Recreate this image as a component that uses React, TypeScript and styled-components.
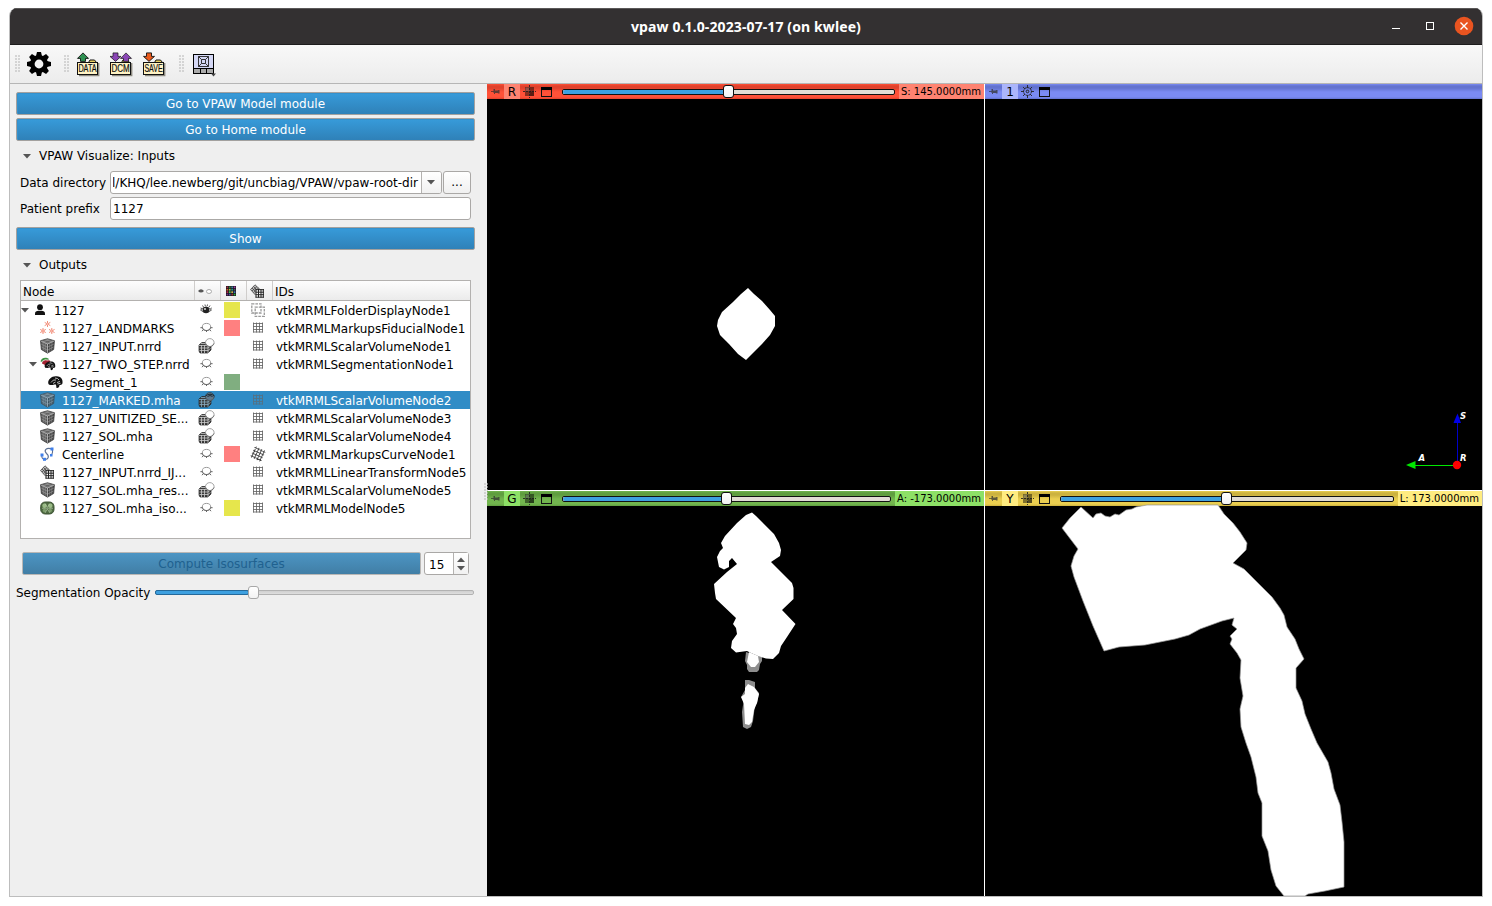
import React from 'react';
import styled, { createGlobalStyle, css } from 'styled-components';

const Global = createGlobalStyle`
  * { box-sizing: border-box; }
  body { margin: 0; background: #fff; font-family: "DejaVu Sans", sans-serif; font-size: 12px; color: #000; }
  svg { display: block; flex: none; overflow: visible; }
`;

const Screen = styled.div`
  width: 1492px;
  height: 906px;
  padding: 8px 9px 9px 9px;
  overflow: hidden;
`;
const Window = styled.div`
  width: 1474px;
  height: 889px;
  border: 1px solid #bdbdbd;
  border-top: 0;
  border-radius: 8px 8px 0 0;
  overflow: hidden;
  display: flex;
  flex-direction: column;
  background: #efefef;
`;
const TitleBar = styled.header`
  height: 37px;
  flex: none;
  background: #333031;
  border-top: 1px solid #5a5858;
  border-bottom: 1px solid #1d1c1c;
  display: grid;
  grid-template-columns: 1fr auto 1fr;
  align-items: center;
`;
const Title = styled.h1`
  grid-column: 2;
  margin: 0;
  color: #fff;
  font: bold 14px/20px "Noto Sans", sans-serif;
  letter-spacing: 0.11px;
  white-space: nowrap;
`;
const WindowControls = styled.div`
  display: flex;
  justify-content: flex-end;
  padding-right: 8px;
`;
const Toolbar = styled.div`
  height: 39px;
  flex: none;
  border-bottom: 1px solid #b6b6b6;
  background: linear-gradient(#f8f8f8, #ececec);
  display: flex;
  align-items: center;
  padding-left: 5px;
`;
const Grip = styled.i<{ $ml?: number }>`
  width: 5px;
  height: 18px;
  margin-left: ${p => p.$ml ?? 0}px;
  background: radial-gradient(circle at 1px 1px, #bdbdbd 0.6px, transparent 0.85px) 0 0 / 3px 3px;
`;
const ToolIcon = styled.span<{ $ml: number }>`
  margin-left: ${p => p.$ml}px;
`;
const Body = styled.main`
  flex: 1;
  display: flex;
  min-height: 0;
`;
const Side = styled.aside`
  width: 477px;
  flex: none;
  padding: 8px 12px 0 6px;
  position: relative;
`;
const Splitter = styled(Grip)`
  position: absolute;
  right: -1px;
  top: 399px;
  width: 4px;
`;
const BlueButton = styled.button<{ $gap?: number }>`
  display: block;
  width: 100%;
  height: 23px;
  margin: 0 0 ${p => p.$gap ?? 3}px;
  padding: 1px 0 0;
  border: 1px solid #a3a19f;
  border-radius: 2px;
  background: linear-gradient(#379bda, #2f81b8);
  box-shadow: inset 1px 1px 0 #3491cd;
  color: #fff;
  font: 12px "DejaVu Sans", sans-serif;
  &:disabled {
    flex: 1;
    width: auto;
    margin: 0;
    border-color: #b9b7b5;
    background: linear-gradient(#4c95c4, #417ea5);
    box-shadow: none;
    color: #20618f;
  }
`;
const SectionTitle = styled.h2<{ $h: number }>`
  margin: 0;
  height: ${p => p.$h}px;
  display: flex;
  align-items: center;
  gap: 8px;
  padding-left: 7px;
  font-size: 12px;
  font-weight: normal;
`;
const FormRow = styled.label<{ $gap: number }>`
  display: grid;
  grid-template-columns: 90px 1fr;
  align-items: center;
  height: 23px;
  margin: 0 4px ${p => p.$gap}px 4px;
`;
const frame = css`
  height: 23px;
  border: 1px solid #aaa8a6;
  border-radius: 3px;
  background: #fff;
`;
const Field = styled.div`
  ${frame}
  padding-left: 2px;
  line-height: 22px;
`;
const PathGroup = styled.div`
  display: flex;
  gap: 1px;
`;
const Combo = styled.div`
  ${frame}
  width: 332px;
  display: flex;
  overflow: hidden;
`;
const ComboText = styled.div`
  flex: 1;
  margin-left: 2px;
  padding-right: 3px;
  display: flex;
  justify-content: flex-end;
  overflow: hidden;
  white-space: nowrap;
  line-height: 22px;
`;
const ComboArrow = styled.div`
  width: 20px;
  border-left: 1px solid #b4b2b0;
  background: linear-gradient(#fff, #f1f1f1);
  display: grid;
  place-items: center;
  padding-right: 1px;
`;
const Browse = styled.button`
  ${frame}
  flex: 1;
  padding: 0 0 1px;
  background: linear-gradient(#fff, #f0f0f0);
  font: 12px "DejaVu Sans", sans-serif;
`;
const Tree = styled.div`
  margin: 0 4px 13px;
  height: 259px;
  border: 1px solid #b3b1af;
  background: #fff;
`;
const columns = css`
  display: grid;
  grid-template-columns: 174px 26px 26px 26px 1fr;
`;
const TreeHead = styled.div`
  ${columns}
  height: 20px;
  border-bottom: 1px solid #b3b1af;
  background: linear-gradient(#fdfdfd, #ebebeb);
`;
const HeadCell = styled.div<{ $center?: boolean }>`
  display: flex;
  align-items: center;
  justify-content: ${p => (p.$center ? 'center' : 'flex-start')};
  padding: ${p => (p.$center ? '0 5px 0 0' : '2px 0 0 2px')};
  border-right: 1px solid #cfcdcb;
  &:last-child { border-right: 0; }
`;
const TreeRow = styled.div<{ $selected?: boolean }>`
  ${columns}
  height: 18px;
  align-items: center;
  line-height: 18px;
  white-space: nowrap;
  ${p => p.$selected && css`background: #308cc6; color: #fff;`}
`;
const NodeCell = styled.div<{ $depth: number }>`
  display: flex;
  align-items: center;
  height: 18px;
  padding-left: ${p => p.$depth * 8}px;
`;
const RowText = styled.span`
  padding-top: 2px;
`;
const Expander = styled.span`
  width: 12px;
  display: flex;
`;
const NodeIcon = styled.span<{ $dim?: boolean }>`
  width: 15px;
  margin: 0 7px 1px -1px;
  opacity: ${p => (p.$dim ? 0.75 : 1)};
`;
const IconCell = styled.div<{ $dim?: boolean }>`
  display: flex;
  justify-content: center;
  padding: 0 4px 1px 0;
  opacity: ${p => (p.$dim ? 0.7 : 1)};
`;
const GridCell = styled(IconCell)`
  padding: 0 4px 1px 0;
`;
const Swatch = styled.div<{ $color?: string }>`
  width: 16px;
  height: 16px;
  margin-left: 3px;
  background: ${p => p.$color ?? 'transparent'};
`;
const IdCell = styled.div`
  padding: 2px 0 0 3px;
  height: 18px;
  line-height: 17px;
`;
const ActionRow = styled.div`
  display: flex;
  align-items: center;
  gap: 3px;
  margin: 0 6px 7px 6px;
`;
const Spin = styled.div`
  ${frame}
  width: 45px;
  display: flex;
  line-height: 24px;
  padding-left: 4px;
`;
const SpinArrows = styled.div`
  width: 15px;
  margin-left: auto;
  border-left: 1px solid #b4b2b0;
  background: linear-gradient(#fff, #f1f1f1);
  display: flex;
  flex-direction: column;
  align-items: center;
  justify-content: center;
  gap: 4px;
`;
const SliderRow = styled.div`
  display: flex;
  align-items: center;
  height: 21px;
  gap: 5px;
  padding-right: 1px;
`;
const Track = styled.div<{ $dark?: boolean }>`
  flex: 1;
  height: ${p => (p.$dark ? 6 : 5)}px;
  display: flex;
  align-items: center;
  border: 1px solid ${p => (p.$dark ? '#111' : '#b2b2b2')};
  border-radius: 2px;
  background: ${p => (p.$dark ? '#e2ddd5' : 'linear-gradient(#cfcfcf, #dedede)')};
`;
const Fill = styled.div<{ $w: number; $dark?: boolean }>`
  width: ${p => p.$w}px;
  height: ${p => (p.$dark ? 4 : 5)}px;
  flex: none;
  margin-left: ${p => (p.$dark ? 0 : -1)}px;
  background: #3da0e0;
  border: ${p => (p.$dark ? '0' : '1px solid #24699a')};
  border-radius: 2px;
`;
const Handle = styled.div<{ $dark?: boolean }>`
  width: 11px;
  height: 13px;
  flex: none;
  margin-left: -1px;
  border: 1px solid ${p => (p.$dark ? '#111' : '#a8a8a8')};
  border-radius: 3px;
  background: linear-gradient(#fff, #f3f3f3);
`;
const Views = styled.section`
  flex: 1;
  display: grid;
  grid-template-columns: 497px 497px;
  grid-template-rows: 406px 405px;
  gap: 1px;
  background: #fff;
`;
const View = styled.div`
  background: #000;
  display: flex;
  flex-direction: column;
  overflow: hidden;
`;
const ViewBar = styled.div<{ $a: string; $b: string }>`
  height: 15px;
  flex: none;
  display: flex;
  align-items: center;
  padding-left: 5px;
  background: linear-gradient(${p => p.$b} 0, ${p => p.$a} 2px, ${p => p.$a} 4px, ${p => p.$b} 8px, ${p => p.$b} 13px, ${p => p.$a} 15px);
`;
const ViewName = styled.div<{ $bg: string }>`
  width: 16px;
  height: 15px;
  margin: 0 3px;
  background: ${p => p.$bg};
  text-align: center;
  line-height: 16px;
`;
const BarIcons = styled.div`
  display: flex;
  align-items: center;
  gap: 5px;
  margin-right: 9px;
`;
const Offset = styled.div<{ $bg: string; $w: number }>`
  width: ${p => p.$w}px;
  height: 15px;
  margin-left: 4px;
  padding-right: 3px;
  background: ${p => p.$bg};
  text-align: right;
  font-size: 10px;
  line-height: 15px;
  white-space: nowrap;
`;

const Down = () => <svg width="8" height="5" viewBox="0 0 8 5"><path d="M0 0h8L4 4.600z" fill="#555" /></svg>;
const Up = () => <svg width="8" height="5" viewBox="0 0 8 5"><path d="M0 5h8L4 .4z" fill="#555" /></svg>;

const Gear = () => (
  <svg width="24" height="24" viewBox="-12 -12 24 24">
    {[0, 45, 90, 135].map(a => <path key={a} d="M-2 -12H2L3.200 -7V7L2 12H-2L-3.200 7V-7Z" transform={`rotate(${a})`} />)}
    <circle r="9" /><circle r="4.400" fill="#f3f3f3" />
  </svg>
);

const arrowUp = 'M5.5 0L11 5.5H8V8.5H3V5.5H0Z';
const arrowDown = 'M5.5 8.5L11 3.5H8V0H3V3.5H0Z';
const Folder = ({ label, children }: { label: string; children: React.ReactNode }) => (
  <svg width="24" height="24" viewBox="0 0 24 24">
    <path d="M3 23.500H22.700V11" fill="none" stroke="#8d8a80" strokeWidth="1.400" />
    <path d="M12.500 10.500L14 8H18.500L20.500 10.500" fill="#e9cf60" stroke="#111" />
    <rect x="1.500" y="10.500" width="20" height="12" fill="#fff3c4" stroke="#111" />
    {children}
    <text x="2.400" y="20.200" fontFamily="Liberation Sans" fontSize="10" fill="#111" stroke="#111" strokeWidth=".2" textLength="18.200" lengthAdjust="spacingAndGlyphs">{label}</text>
  </svg>
);
const Layout = () => (
  <svg width="24" height="24" viewBox="0 0 24 24">
    <rect x="1.500" y="2.500" width="20" height="19" fill="#d5d8f5" stroke="#000" />
    <rect x="2" y="17" width="19" height="4" fill="#aaa" />
    <path d="M1 16.500H22M8.500 16.500V21M14.500 16.500V21" stroke="#000" />
    <path d="M6.500 4.500H16.500V14.500H6.500ZM9.500 7.500H13.500V11.500H9.500ZM6.500 4.500L9.500 7.500M16.500 4.500L13.500 7.500M6.500 14.500L9.500 11.500M16.500 14.500L13.500 11.500" fill="none" stroke="#222" strokeWidth=".9" />
    <path d="M19 21.500H24L21.500 24.500Z" fill="#444" />
  </svg>
);

const Eye = () => (
  <svg width="12" height="11" viewBox="0 0 12 11">
    <path d="M.5 6Q6 0 11.500 6Q6 11 .5 6Z" fill="#bbb" stroke="#666" />
    <circle cx="6" cy="6" r="3.200" fill="#222" /><circle cx="5" cy="5" r=".9" fill="#eee" />
    <path d="M.5 4L2 4.500M2.500 1.500L3.500 3M5 .5L5.300 2M7.500 .5L7.200 2M10 1.500L9 3M11.800 4L10.500 4.500" stroke="#444" strokeWidth=".9" />
  </svg>
);
const Closed = () => (
  <svg width="13" height="11" viewBox="0 0 13 11">
    <ellipse cx="6.500" cy="5" rx="4.200" ry="3.600" fill="#fff" stroke="#999" strokeWidth="1" />
    <path d="M2.300 5.500C3.500 9.500 9.500 9.500 10.700 5.500M.4 5.700H2.300M10.700 5.700H12.600M3.300 7.600L2 9.200M6.500 8.300V10M9.700 7.600L11 9.200" fill="none" stroke="#666" strokeWidth="1" />
  </svg>
);
const Cube = () => (
  <svg width="15" height="16" viewBox="0 0 15 16">
    <path d="M7.500 .7L14.500 2.700L13.700 11.500L7.500 15.200L1.300 11.500L.5 2.700Z" fill="#3f3f3f" />
    <path d="M7.500 .7L14.300 2.700L7.500 5.800L.7 2.700Z" fill="#8c8c8c" />
    <path d="M.7 3L7.500 6V15.200L1.500 11.500Z" fill="#565656" />
    <path d="M3 4L3.300 12.500M5.200 5V13.700M9.800 5V13.700M12 4L11.700 12.500M1 6L7.500 9.200L14 6M1.200 8.800L7.500 12.200L13.800 8.800" fill="none" stroke="#a9a9a9" strokeWidth=".5" />
    <path d="M3 2.200L9.800 4.700M12 2.200L5.200 4.700" stroke="#444" strokeWidth=".5" />
    <path d="M.8 3L7.500 6L14.200 3M7.500 6V15" fill="none" stroke="#d0d0d0" strokeWidth=".7" />
    <path d="M7.500 .7L14.500 2.700L13.700 11.500L7.500 15.200L1.300 11.500L.5 2.700Z" fill="none" stroke="#444" strokeWidth=".7" />
  </svg>
);
const CubeEye = ({ open }: { open?: boolean }) => (
  <svg width="17" height="16" viewBox="0 0 17 16">
    <path d="M1 7L4 4.500H11L13 7V12L10 15H2L1 13Z" fill="#3c3c3c" stroke="#222" strokeWidth=".7" />
    <path d="M1 7.500H10L12.500 5.500M1.500 10H10L12.500 8M1.500 12.500H10L12.500 10.500M3.500 7V15M6.500 7V15M10 7.500V15M3 5.500H10" fill="none" stroke={open ? '#86a9bf' : '#ccc'} strokeWidth=".8" />
    <ellipse cx="11.800" cy="4.600" rx="4.300" ry="4" fill={open ? '#60788a' : '#fff'} stroke={open ? '#2b4658' : '#999'} strokeWidth=".9" />
    <path d="M7.600 5.500Q9 8.700 11.800 8.700Q14.600 8.700 16 5.500" fill="none" stroke="#666" strokeWidth=".8" />
    {open && <path d="M7.500 4Q12 .5 16.500 4M9.500 4.500Q12 2.500 14.500 4.500" stroke="#1c2b35" fill="none" />}
  </svg>
);
const GridIcon = () => (
  <svg width="10" height="11" viewBox="0 0 10 11"><path d="M.5 .5V10.500M3.500 .5V10.500M6.500 .5V10.500M9.500 .5V10.500M0 1.500H10M0 4.500H10M0 7.500H10M0 10H10" stroke="#666" strokeWidth=".85" /></svg>
);
const TiltGrid = () => (
  <svg width="14" height="14" viewBox="-7 -7 14 14"><path transform="rotate(25)" d="M-4.500 -6V6M-1.500 -6V6M1.500 -6V6M4.500 -6V6M-6 -4.500H6M-6 -1.500H6M-6 1.500H6M-6 4.500H6" stroke="#444" strokeWidth=".9" /></svg>
);
const Transform = () => (
  <svg width="14" height="14" viewBox="0 0 14 14">
    <path d="M5 .8L10 5.500L5 10.500L.5 5.500Z" fill="#bbb" stroke="#555" strokeWidth=".9" />
    <path d="M3.500 2.500L8 7M2 4L6.500 8.500M7 2.500L2 7M8.500 4L3.500 8.500" stroke="#444" strokeWidth=".8" />
    <path d="M5.500 5.500H13.500V13.500H5.500Z" fill="#fff" />
    <path d="M6 5V13.500M8.500 5V13.500M11 5V13.500M13.300 5V13.500M5.500 5.700H14M5.500 8.200H14M5.500 10.700H14M5.500 13.200H14" stroke="#222" strokeWidth="1" />
  </svg>
);
const FolderTransform = () => (
  <svg width="14" height="14" viewBox="0 0 14 14"><path d="M.8 .8H10V10H.8ZM4.200 4.200H13.300V13.300H4.200Z" fill="none" stroke="#999" strokeWidth="1.300" strokeDasharray="2.600 1" /></svg>
);
const Palette = () => {
  const cs = ['#a12f3a', '#2f8a3a', '#3c7f9b', '#a73ca8', '#d05a2b', '#9bd03a', '#24968e', '#456', '#b3294a', '#3fc456', '#c3b04a', '#3c74b4', '#733086', '#4657a7', '#953333', '#2cac3c'];
  return <svg width="10" height="10" viewBox="0 0 10 10"><rect width="10" height="10" fill="#17131c" />{cs.map((c, i) => <rect key={i} x={.5 + (i % 4) * 2.4} y={.5 + Math.floor(i / 4) * 2.4} width="1.700" height="1.700" fill={c} />)}</svg>;
};
const Brain = ({ small }: { small?: boolean }) => (
  <g transform={small ? 'translate(4.500 3.500) scale(.74)' : undefined}>
    <path d="M.3 8.500C-.5 4.500 4 1 8 1.300C12 .8 15 4 14.500 7C15 9 13 10.500 11.500 10C11.500 12 10 13.500 8.500 13L8 9.500C6 9 5 10.500 3 10C2 10 .5 9.700 .3 8.500Z" fill="#111" />
    <path d="M3 7.500Q5 4 8 5M7 3Q10 3 11 5M9 7.500L12 6.500M9.500 9L12.500 8.300M5 8.500L7.500 7" fill="none" stroke="#ccc" strokeWidth=".9" />
  </g>
);
const Segment = () => <svg width="15" height="14" viewBox="0 0 15 14"><Brain /></svg>;
const Segmentation = () => (
  <svg width="15" height="14" viewBox="0 0 15 14">
    <path d="M.5 4.500C1 .5 6 -.5 9 2L6 5.500Z" fill="#3c9141" /><path d="M2 6.500C2 2.500 7 1.500 10.500 4L7 9Z" fill="#a52231" /><path d="M2 4.500Q5 1.700 8.500 3.200" stroke="#fff" fill="none" strokeWidth=".8" />
    <Brain small />
  </svg>
);
const Person = () => <svg width="13" height="13" viewBox="0 0 13 13"><circle cx="8" cy="4.200" r="2.900" fill="#111" /><path d="M3 12V10.500C3 8.500 4.500 8 6.500 7.800H9.500C11.500 8 13 8.500 13 10.500V12Z" fill="#111" /></svg>;
const Landmarks = () => (
  <svg width="15" height="14" viewBox="0 0 15 14">
    {[[7.5, 3], [3, 10], [11.8, 10]].map(([x, y]) => <g key={x} transform={`translate(${x} ${y})`} stroke="#f0826c" strokeWidth=".9" fill="none"><path d="M0 -3V-1M0 3V1M-2.800 -1.600L-1 -.6M2.800 -1.600L1 -.6M-2.800 1.600L-1 .6M2.800 1.600L1 .6" /><circle r="1" /></g>)}
  </svg>
);
const Curve = () => (
  <svg width="14" height="14" viewBox="0 0 14 14">
    <path d="M12 2C6 0 3.500 3.500 6.500 6.500C10 9.500 8 13 4.500 12.500C2 12 1.500 10 2 8M12 2C13 4 12.500 6.500 11 8.500" fill="none" stroke="#5b6f92" strokeWidth="1.100" />
    <g fill="#3f7fea"><rect x="10.500" y=".5" width="3" height="3" /><rect x=".5" y="6.500" width="3" height="3" /><rect x="3" y="10.800" width="3" height="3" /><rect x="10" y="7" width="2.500" height="2.500" /></g>
  </svg>
);
const Model = () => (
  <svg width="15" height="14" viewBox="0 0 15 14">
    <rect x=".7" y="1" width="13.300" height="12" rx="4.500" fill="#4f6b42" stroke="#3c5233" />
    <circle cx="4.500" cy="4.700" r="2.200" fill="#9abb86" /><circle cx="10.300" cy="4.700" r="2.200" fill="#9abb86" /><circle cx="4.500" cy="9.500" r="1.700" fill="#7d9c6b" /><circle cx="10.300" cy="9.500" r="1.700" fill="#7d9c6b" />
    <path d="M5 2.500L7.300 6.500L10 2.500M2 7.300H13M5 12L7.300 8L10 12" fill="none" stroke="#bcd0ae" strokeWidth=".6" />
  </svg>
);

const Pin = () => <svg width="9" height="7" viewBox="0 0 9 7" opacity=".75"><path d="M-1 3.500H2" stroke="#222" strokeWidth=".8" /><path d="M1.500 1H3V2.500H5.500L6.500 2H7.500V5.500H6.500L5.500 5H3V6H2V4.500H1V3H1.500Z" fill="#333" /></svg>;
const Fit = () => (
  <svg width="13" height="13" viewBox="0 0 13 13"><rect x="2" y="2" width="9" height="9" fill="#000" opacity=".45" /><rect x="2.500" y="2.500" width="4" height="3.500" fill="#fff" opacity=".2" /><path d="M6.500 0V13M0 6.500H13" stroke="#222" strokeDasharray="2 1" strokeWidth=".9" /><rect x="7" y="6.500" width="4" height="4.500" opacity=".35" /></svg>
);
const Center3D = () => (
  <svg width="13" height="13" viewBox="0 0 13 13" fill="none" stroke="#222"><circle cx="6.500" cy="6.500" r="3.900" strokeDasharray="2 1" /><circle cx="6.500" cy="6.500" r="1.300" /><path d="M6.500 0V3M6.500 10V13M0 6.500H3M10 6.500H13M2 2L4 4M11 2L9 4M2 11L4 9M11 11L9 9" strokeWidth=".9" /></svg>
);
const Maximize = () => <svg width="12" height="12" viewBox="0 0 12 12"><rect x=".5" y="1.500" width="10" height="9" fill="none" stroke="#111" /><rect x="0" y="1" width="11" height="3" fill="#000" /></svg>;

type NodeRow = { name: string; depth: number; open?: boolean; icon: React.ReactNode; vis: React.ReactNode; color?: string; grid?: React.ReactNode; id?: string; selected?: boolean };
const g = <GridIcon />;
const rows: NodeRow[] = [
  { name: '1127', depth: 0, open: true, icon: <Person />, vis: <Eye />, color: '#e6e64c', grid: <FolderTransform />, id: 'vtkMRMLFolderDisplayNode1' },
  { name: '1127_LANDMARKS', depth: 1, icon: <Landmarks />, vis: <Closed />, color: '#ff8080', grid: g, id: 'vtkMRMLMarkupsFiducialNode1' },
  { name: '1127_INPUT.nrrd', depth: 1, icon: <Cube />, vis: <CubeEye />, grid: g, id: 'vtkMRMLScalarVolumeNode1' },
  { name: '1127_TWO_STEP.nrrd', depth: 1, open: true, icon: <Segmentation />, vis: <Closed />, grid: g, id: 'vtkMRMLSegmentationNode1' },
  { name: 'Segment_1', depth: 2, icon: <Segment />, vis: <Closed />, color: '#80ae80' },
  { name: '1127_MARKED.mha', depth: 1, icon: <Cube />, vis: <CubeEye open />, grid: g, id: 'vtkMRMLScalarVolumeNode2', selected: true },
  { name: '1127_UNITIZED_SE...', depth: 1, icon: <Cube />, vis: <CubeEye />, grid: g, id: 'vtkMRMLScalarVolumeNode3' },
  { name: '1127_SOL.mha', depth: 1, icon: <Cube />, vis: <CubeEye />, grid: g, id: 'vtkMRMLScalarVolumeNode4' },
  { name: 'Centerline', depth: 1, icon: <Curve />, vis: <Closed />, color: '#ff8080', grid: <TiltGrid />, id: 'vtkMRMLMarkupsCurveNode1' },
  { name: '1127_INPUT.nrrd_IJ...', depth: 1, icon: <Transform />, vis: <Closed />, grid: g, id: 'vtkMRMLLinearTransformNode5' },
  { name: '1127_SOL.mha_res...', depth: 1, icon: <Cube />, vis: <CubeEye />, grid: g, id: 'vtkMRMLScalarVolumeNode5' },
  { name: '1127_SOL.mha_iso...', depth: 1, icon: <Model />, vis: <Closed />, color: '#e6e64c', grid: g, id: 'vtkMRMLModelNode5' },
];

type SliceProps = { name: string; a: string; b: string; label: string; offset?: string; fill?: number; width?: number; children?: React.ReactNode };
const SliceView = ({ name, a, b, label, offset, fill = 0, width = 0, children }: SliceProps) => (
  <View>
    <ViewBar $a={a} $b={b}>
      <Pin />
      <ViewName $bg={label}>{name}</ViewName>
      <BarIcons>{offset ? <Fit /> : <Center3D />}<Maximize /></BarIcons>
      {offset && <><Track $dark><Fill $dark $w={fill} /><Handle $dark /></Track><Offset $bg={label} $w={width}>{offset}</Offset></>}
    </ViewBar>
    {children}
  </View>
);

export default function App() {
  return (
    <Screen>
      <Global />
      <Window>
        <TitleBar>
          <Title>vpaw 0.1.0-2023-07-17 (on kwlee)</Title>
          <WindowControls>
            <svg width="90" height="20" viewBox="0 0 90 20">
              <path d="M8 11.500H16" stroke="#fff" />
              <rect x="42.500" y="5.500" width="7" height="7" fill="none" stroke="#fff" />
              <circle cx="80" cy="9" r="9.300" fill="#e95420" />
              <path d="M76.500 5.500L83.500 12.500M83.500 5.500L76.500 12.500" stroke="#fff" strokeWidth="1.400" />
            </svg>
          </WindowControls>
        </TitleBar>
        <Toolbar>
          <Grip />
          <ToolIcon $ml={7}><Gear /></ToolIcon>
          <Grip $ml={13} />
          <ToolIcon $ml={7}><Folder label="DATA"><path d={arrowUp} transform="translate(1.500 .9)" fill="#2f9152" stroke="#111" strokeWidth=".9" /></Folder></ToolIcon>
          <ToolIcon $ml={9}><Folder label="DCM"><path d={arrowDown} transform="translate(1 .9)" fill="#8a46b5" stroke="#111" strokeWidth=".7" /><path d={arrowUp} transform="translate(11.500 .9)" fill="#8a46b5" stroke="#111" strokeWidth=".7" /></Folder></ToolIcon>
          <ToolIcon $ml={9}><Folder label="SAVE"><path d={arrowDown} transform="translate(1.500 .9)" fill="#ea5a1c" stroke="#111" strokeWidth=".9" /></Folder></ToolIcon>
          <Grip $ml={13} />
          <ToolIcon $ml={8}><Layout /></ToolIcon>
        </Toolbar>
        <Body>
          <Side>
            <BlueButton>Go to VPAW Model module</BlueButton>
            <BlueButton $gap={0}>Go to Home module</BlueButton>
            <SectionTitle $h={30}><Down />VPAW Visualize: Inputs</SectionTitle>
            <FormRow $gap={3}>
              <span>Data directory</span>
              <PathGroup>
                <Combo><ComboText><span>l/KHQ/lee.newberg/git/uncbiag/VPAW/vpaw-root-dir</span></ComboText><ComboArrow><Down /></ComboArrow></Combo>
                <Browse>...</Browse>
              </PathGroup>
            </FormRow>
            <FormRow $gap={7}><span>Patient prefix</span><Field>1127</Field></FormRow>
            <BlueButton $gap={0}>Show</BlueButton>
            <SectionTitle $h={30}><Down />Outputs</SectionTitle>
            <Tree>
              <TreeHead>
                <HeadCell>Node</HeadCell>
                <HeadCell $center><svg width="14" height="8" viewBox="0 0 14 8"><path d="M0 4Q3 .5 6 4Q3 7 0 4Z" fill="#555" /><ellipse cx="11" cy="4.500" rx="2.500" ry="2" fill="#fff" stroke="#aaa" /></svg></HeadCell>
                <HeadCell $center><Palette /></HeadCell>
                <HeadCell $center><Transform /></HeadCell>
                <HeadCell>IDs</HeadCell>
              </TreeHead>
              {rows.map(r => (
                <TreeRow key={r.name} $selected={r.selected}>
                  <NodeCell $depth={r.depth}><Expander>{r.open && <Down />}</Expander><NodeIcon $dim={r.selected}>{r.icon}</NodeIcon><RowText>{r.name}</RowText></NodeCell>
                  <IconCell>{r.vis}</IconCell>
                  <Swatch $color={r.color} />
                  <GridCell $dim={r.selected}>{r.grid}</GridCell>
                  <IdCell>{r.id}</IdCell>
                </TreeRow>
              ))}
            </Tree>
            <ActionRow>
              <BlueButton disabled>Compute Isosurfaces</BlueButton>
              <Spin>15<SpinArrows><Up /><Down /></SpinArrows></Spin>
            </ActionRow>
            <SliderRow>Segmentation Opacity<Track><Fill $w={94} /><Handle /></Track></SliderRow>
            <Splitter />
          </Side>
          <Views>
            <SliceView name="R" a="#e0422d" b="#ff5138" label="#ff8371" offset="S: 145.0000mm" fill={161} width={85}>
              <svg width="497" height="391" viewBox="487 99 497 391">
                <path d="M748 288L754 294L762 301L770 310L775 316V326L770 335L762 344L746 360L738 354L729 344L720 335L717 326L718 320L722 312L733 302L741 294Z" fill="#fff" />
              </svg>
            </SliceView>
            <SliceView name="1" a="#6373cf" b="#7b8bf3" label="#abb5fb">
              <svg width="497" height="391" viewBox="985 99 497 391">
                <path d="M1457.500 465V423" stroke="#0000c8" /><path d="M1453.500 423L1457.500 413.500L1461 423Z" fill="#0000e8" />
                <path d="M1457 465.500H1414" stroke="#00e800" /><path d="M1406 465L1415.500 461V469Z" fill="#00e800" />
                <circle cx="1457" cy="465" r="4.200" fill="#f00" />
                <g fill="#fff" fontFamily="DejaVu Sans" fontSize="8.500" fontWeight="bold" fontStyle="italic"><text x="1460" y="419">S</text><text x="1418.500" y="461">A</text><text x="1460" y="461">R</text></g>
              </svg>
            </SliceView>
            <SliceView name="G" a="#5f9d3f" b="#72b54e" label="#8de066" offset="A: -173.0000mm" fill={159} width={89}>
              <svg width="497" height="390" viewBox="487 506 497 390">
                <path d="M746 652L762 657L762 661L760 664L759 670L757 672H749L747 669V665L745 661ZM745 680H749L755 682V688L759 693L757 703L755 705L753 721L751 727L747 729L743 727L742 712L744 698L741 697L745 690Z" fill="#8d8d8d" />
                <path d="M752 512.500L756 516L774 534L779 543L781 550L780 556L771 562L792 583L793.500 588V599L782 610L795.500 624L787 637L781 646L779 653L773 659L766 658.500L758 656L751 653L747 651L736 652.500L731 648L732 641L737 634L736 628L733 624L736 618L716 599L715 593L714 584L727 572L737 564L732 558L729 561V567L724 569.500L719 567L717 557L720 551L723 548L721 543L725 536L737 523L746 515Z" fill="#fff" />
                <path d="M749 652L758 656L759 662L755 667H751L747 662ZM748 684L754 687L759 694L757 703L754 710L752 722L749 725L745 724L744 704L741 697L745 694V688Z" fill="#fff" />
              </svg>
            </SliceView>
            <SliceView name="Y" a="#ccb23f" b="#ebcf50" label="#ffec80" offset="L: 173.0000mm" fill={161} width={84}>
              <svg width="497" height="390" viewBox="985 506 497 390">
                <path d="M1081 507L1093 518L1096 514L1101 513L1105 516L1110 517L1115 514L1119 515L1126 510L1132 509L1136 507L1147 505H1218L1224 514L1233 523L1240 532L1247 543L1246 550L1240 556L1233 563L1244 569L1252 577L1262 587L1272 597L1280 608L1284 615L1287 627L1295 639L1299 649L1304 659L1296 668L1296 688L1302 701L1305 714L1311 729L1317 743L1328 762L1331 773L1334 789L1340 805L1342 822L1344 842V887L1325 891L1308 894L1305 896H1284L1276 886L1271 870L1268 851L1262 836L1262 803L1258 793L1256 777L1251 757L1246 743L1241 727L1240 709L1243 696L1240 678L1241 660L1237 653L1230 644L1232 639L1230 636L1237 629L1232 625L1234 618L1222 621L1200 629L1189 635L1175 639L1145 645L1119 647L1104 651L1093 626L1083 601L1074 577L1071 566L1074 556L1078 549L1062 528L1070 518Z" fill="#fff" stroke="#999" strokeWidth=".7" />
              </svg>
            </SliceView>
          </Views>
        </Body>
      </Window>
    </Screen>
  );
}
